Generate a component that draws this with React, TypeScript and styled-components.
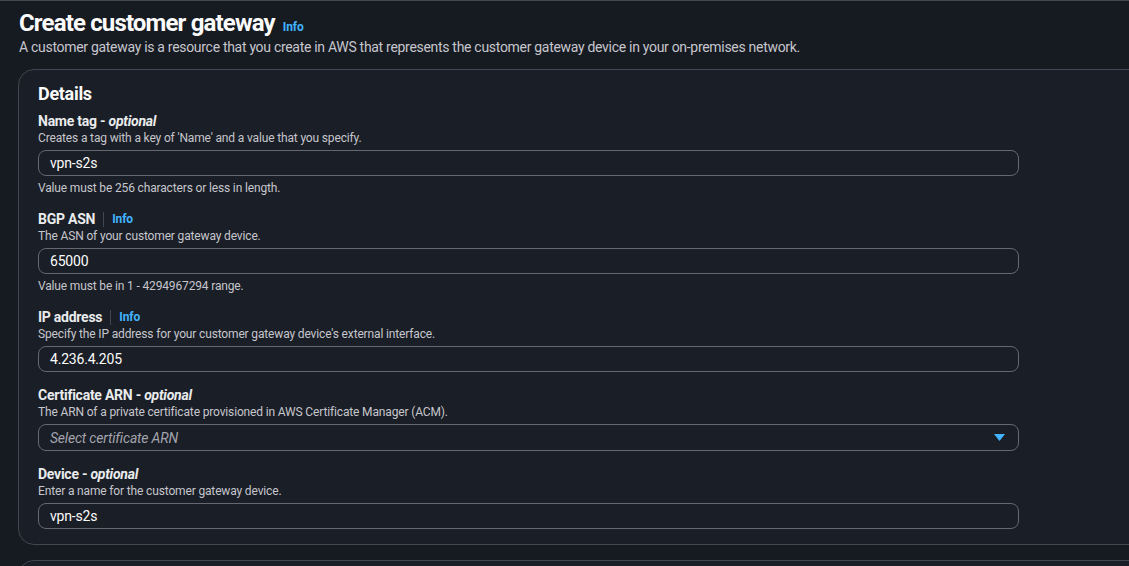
import React from "react";
import styled, { createGlobalStyle } from "styled-components";

const Global = createGlobalStyle`
  html, body { margin: 0; padding: 0; background: #161a21; overflow: hidden; }
  body { font-family: Roboto, "Open Sans", Arial, sans-serif; color: #e9ebed; }
  * { box-sizing: border-box; }
`;

const Page = styled.div`
  border-top: 1px solid #414750;
  padding: 8px 0 0 18px;
  width: 1129px;
  height: 566px;
  overflow: hidden;
`;

const TitleRow = styled.div`
  display: flex;
  align-items: baseline;
  gap: 8px;
  padding-left: 1px;
`;

const Title = styled.h1`
  margin: 0;
  font-size: 24px;
  line-height: 28px;
  font-weight: 700;
  color: #fbfbfb;
  letter-spacing: -0.85px;
`;

const InfoLink = styled.a`
  font-size: 12px;
  font-weight: 700;
  color: #42b4ff;
  text-decoration: none;
  line-height: 16px;
  letter-spacing: -0.1px;
`;

const PageDesc = styled.p`
  margin: 0 0 12px 1px;
  font-size: 14px;
  line-height: 20px;
  color: #c6c6cd;
  letter-spacing: -0.3px;
`;

const Container = styled.section`
  background: #1a1e26;
  border: 1px solid #414750;
  border-radius: 16px;
  padding: 13px 19px 15px;
  width: 1140px;
`;

const NextContainer = styled(Container)`
  margin-top: 15px;
  height: 40px;
`;

const SectionTitle = styled.h2`
  margin: 0 0 7px;
  font-size: 18px;
  line-height: 22px;
  font-weight: 700;
  color: #fbfbfb;
  letter-spacing: -0.3px;
`;

const Fields = styled.div`
  display: flex;
  flex-direction: column;
  gap: 14px;
`;

const Field = styled.div`
  display: flex;
  flex-direction: column;
  width: 981px;
`;

const LabelRow = styled.div`
  display: flex;
  align-items: center;
  height: 18px;
`;

const Label = styled.label`
  font-size: 14px;
  line-height: 18px;
  font-weight: 700;
  color: #e9ebed;
  letter-spacing: -0.25px;
  em { font-style: italic; }
`;

const Sep = styled.span`
  width: 1px;
  height: 15px;
  background: #414750;
  margin: 0 8px;
`;

const Desc = styled.div`
  font-size: 12px;
  line-height: 16px;
  color: #c6c6cd;
  letter-spacing: -0.15px;
`;

const Constraint = styled(Desc)`
  margin-top: 4px;
`;

const Box = styled.div<{ $placeholder?: boolean; $select?: boolean }>`
  margin-top: 4px;
  height: ${(p) => (p.$select ? 27 : 26)}px;
  border: 1px solid #656871;
  border-radius: 8px;
  padding: 0 11px;
  display: flex;
  align-items: center;
  justify-content: space-between;
  font-size: 14px;
  letter-spacing: -0.2px;
  color: ${(p) => (p.$placeholder ? "#a4a4ad" : "#fbfbfb")};
  font-style: ${(p) => (p.$placeholder ? "italic" : "normal")};
`;

const Caret = () => (
  <svg width="11" height="7" viewBox="0 0 11 7" style={{ marginRight: 2 }}>
    <path d="M0 0h11L5.5 7z" fill="#42b4ff" />
  </svg>
);

type F = {
  label: string;
  optional?: boolean;
  info?: boolean;
  desc: string;
  value: string;
  placeholder?: boolean;
  select?: boolean;
  constraint?: string;
};

const fields: F[] = [
  { label: "Name tag", optional: true, desc: "Creates a tag with a key of 'Name' and a value that you specify.", value: "vpn-s2s", constraint: "Value must be 256 characters or less in length." },
  { label: "BGP ASN", info: true, desc: "The ASN of your customer gateway device.", value: "65000", constraint: "Value must be in 1 - 4294967294 range." },
  { label: "IP address", info: true, desc: "Specify the IP address for your customer gateway device's external interface.", value: "4.236.4.205" },
  { label: "Certificate ARN", optional: true, desc: "The ARN of a private certificate provisioned in AWS Certificate Manager (ACM).", value: "Select certificate ARN", placeholder: true, select: true },
  { label: "Device", optional: true, desc: "Enter a name for the customer gateway device.", value: "vpn-s2s" },
];

export default function App() {
  return (
    <Page>
      <Global />
      <TitleRow>
        <Title>Create customer gateway</Title>
        <InfoLink>Info</InfoLink>
      </TitleRow>
      <PageDesc>
        A customer gateway is a resource that you create in AWS that represents the customer gateway device in your on-premises network.
      </PageDesc>
      <Container>
        <SectionTitle>Details</SectionTitle>
        <Fields>
          {fields.map((f) => (
            <Field key={f.label}>
              <LabelRow>
                <Label>
                  {f.label}
                  {f.optional && (
                    <>
                      {" - "}
                      <em>optional</em>
                    </>
                  )}
                </Label>
                {f.info && (
                  <>
                    <Sep />
                    <InfoLink>Info</InfoLink>
                  </>
                )}
              </LabelRow>
              <Desc>{f.desc}</Desc>
              <Box $placeholder={f.placeholder} $select={f.select}>
                <span>{f.value}</span>
                {f.select && <Caret />}
              </Box>
              {f.constraint && <Constraint>{f.constraint}</Constraint>}
            </Field>
          ))}
        </Fields>
      </Container>
      <NextContainer />
    </Page>
  );
}
